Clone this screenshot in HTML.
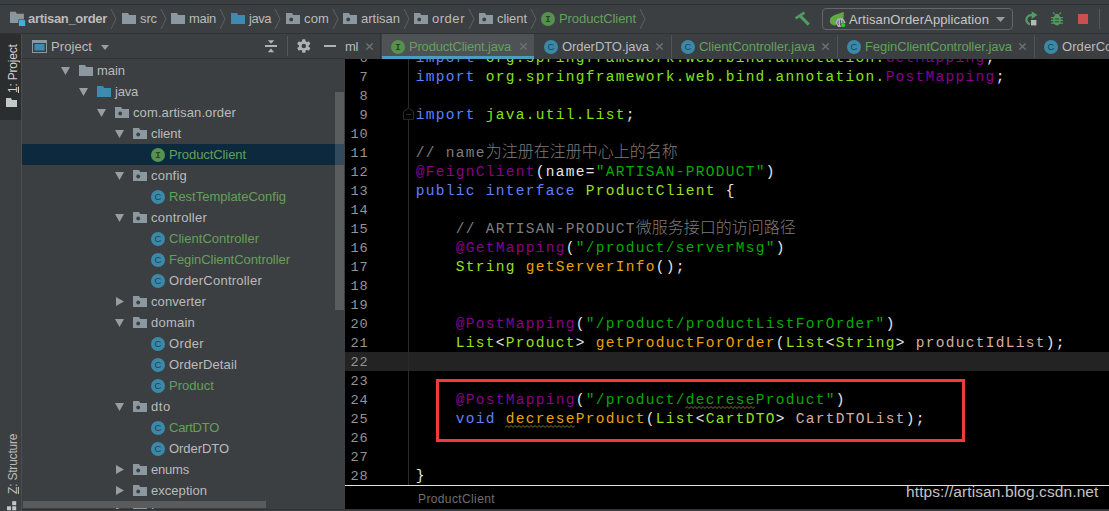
<!DOCTYPE html>
<html><head><meta charset="utf-8"><title>ProductClient</title><style>
*{box-sizing:border-box;margin:0;padding:0}
html,body{width:1109px;height:511px;overflow:hidden;background:#3c3f41}
body{position:relative;font-family:"Liberation Sans","Noto Sans CJK SC",sans-serif;font-size:13px;color:#bbbbbb}
.abs{position:absolute}
.t{position:absolute;white-space:pre;line-height:16px;height:16px;font-size:13px;transform-origin:0 50%}
.g{color:#62a15a}
.w{color:#bbbbbb}
#editor{position:absolute;left:345px;top:59px;width:764px;height:427px;background:#000;overflow:hidden}
.ln{position:absolute;left:0;width:23.6px;text-align:right;font-family:"Liberation Mono",monospace;font-size:13.6px;letter-spacing:0.84px;color:#949494;height:19px;line-height:19px;white-space:pre}
.cl{position:absolute;left:70.65px;height:19px;line-height:19px;font-family:"Liberation Mono","Noto Sans CJK SC",monospace;font-size:14.5px;letter-spacing:1.298px;white-space:pre;color:#e6e6e6}
.cj{font-family:"Noto Sans CJK SC",sans-serif;font-size:16px;font-weight:300;line-height:0;letter-spacing:0}
.k{color:#5f80ff}
.p{color:#84e41a}
.a{color:#88008c}
.c{color:#7d7d7d}
.s{color:#00ac00}
.y{color:#98e020}
.m{color:#e8a408}
.v{color:#d6aea6}
.x{color:#e6e6e6}
</style></head><body>
<div class="abs" style="left:0;top:0;width:1109px;height:4px;background:#3c3f41"></div>
<div class="abs" style="left:0;top:4px;width:1109px;height:1px;background:#2d2f30"></div>
<div class="abs" style="left:0;top:33px;width:1109px;height:1px;background:#323232"></div>
<svg class="abs" style="left:10px;top:11px" width="17" height="17" viewBox="10 11 17 17"><path d="M10 11.7h5.6l1.3 2.1h7v9.3h-13.9z" fill="#8a969e"/><rect x="18.3" y="19.5" width="7.4" height="7" fill="#3c3f41"/><rect x="18.9" y="20.1" width="6.3" height="5.9" fill="#3fb2de"/></svg>
<div class="t w" style="left:28px;top:11px;font-weight:bold;letter-spacing:-0.315px;">artisan_order</div>
<svg class="abs" style="left:110px;top:8px" width="8" height="22" viewBox="0 0 8 22"><path d="M1 1l5 10l-5 10" fill="none" stroke="#5e6163" stroke-width="1"/></svg>
<svg class="abs" style="left:122px;top:13px" width="14" height="11" viewBox="0 0 14 11"><path d="M0 0h6l1.2 2h6.8v9h-14z" fill="#8c98a0"/></svg>
<div class="t w" style="left:140px;top:11px;letter-spacing:-0.115px;">src</div>
<svg class="abs" style="left:160px;top:8px" width="8" height="22" viewBox="0 0 8 22"><path d="M1 1l5 10l-5 10" fill="none" stroke="#5e6163" stroke-width="1"/></svg>
<svg class="abs" style="left:171px;top:13px" width="14" height="11" viewBox="0 0 14 11"><path d="M0 0h6l1.2 2h6.8v9h-14z" fill="#8c98a0"/></svg>
<div class="t w" style="left:189px;top:11px;letter-spacing:-0.297px;">main</div>
<svg class="abs" style="left:219px;top:8px" width="8" height="22" viewBox="0 0 8 22"><path d="M1 1l5 10l-5 10" fill="none" stroke="#5e6163" stroke-width="1"/></svg>
<svg class="abs" style="left:231px;top:13px" width="14" height="11" viewBox="0 0 14 11"><path d="M0 0h6l1.2 2h6.8v9h-14z" fill="#3d8cb0"/></svg>
<div class="t w" style="left:249px;top:11px;letter-spacing:-0.465px;">java</div>
<svg class="abs" style="left:274px;top:8px" width="8" height="22" viewBox="0 0 8 22"><path d="M1 1l5 10l-5 10" fill="none" stroke="#5e6163" stroke-width="1"/></svg>
<svg class="abs" style="left:286px;top:13px" width="14" height="11" viewBox="0 0 14 11"><path d="M0 0h6l1.2 2h6.8v9h-14z" fill="#8c98a0"/><circle cx="5.2" cy="6.5" r="1.9" fill="#3c3f41"/></svg>
<div class="t w" style="left:304px;top:11px;letter-spacing:0.146px;">com</div>
<svg class="abs" style="left:332px;top:8px" width="8" height="22" viewBox="0 0 8 22"><path d="M1 1l5 10l-5 10" fill="none" stroke="#5e6163" stroke-width="1"/></svg>
<svg class="abs" style="left:343px;top:13px" width="14" height="11" viewBox="0 0 14 11"><path d="M0 0h6l1.2 2h6.8v9h-14z" fill="#8c98a0"/><circle cx="5.2" cy="6.5" r="1.9" fill="#3c3f41"/></svg>
<div class="t w" style="left:361px;top:11px;letter-spacing:-0.004px;">artisan</div>
<svg class="abs" style="left:403px;top:8px" width="8" height="22" viewBox="0 0 8 22"><path d="M1 1l5 10l-5 10" fill="none" stroke="#5e6163" stroke-width="1"/></svg>
<svg class="abs" style="left:414px;top:13px" width="14" height="11" viewBox="0 0 14 11"><path d="M0 0h6l1.2 2h6.8v9h-14z" fill="#8c98a0"/><circle cx="5.2" cy="6.5" r="1.9" fill="#3c3f41"/></svg>
<div class="t w" style="left:432px;top:11px;letter-spacing:0.528px;">order</div>
<svg class="abs" style="left:468px;top:8px" width="8" height="22" viewBox="0 0 8 22"><path d="M1 1l5 10l-5 10" fill="none" stroke="#5e6163" stroke-width="1"/></svg>
<svg class="abs" style="left:479px;top:13px" width="14" height="11" viewBox="0 0 14 11"><path d="M0 0h6l1.2 2h6.8v9h-14z" fill="#8c98a0"/><circle cx="5.2" cy="6.5" r="1.9" fill="#3c3f41"/></svg>
<div class="t w" style="left:497px;top:11px;letter-spacing:-0.060px;">client</div>
<svg class="abs" style="left:530px;top:8px" width="8" height="22" viewBox="0 0 8 22"><path d="M1 1l5 10l-5 10" fill="none" stroke="#5e6163" stroke-width="1"/></svg>
<svg class="abs" style="left:541px;top:11.5px" width="14" height="14" viewBox="0 0 14 14"><circle cx="7" cy="7" r="7" fill="#55924e"/><text x="7" y="10" text-anchor="middle" font-family="Liberation Mono,monospace" font-weight="bold" font-size="9" fill="#264026">I</text></svg>
<div class="t g" style="left:559px;top:11px;letter-spacing:-0.081px;">ProductClient</div>
<svg class="abs" style="left:639px;top:8px" width="8" height="22" viewBox="0 0 8 22"><path d="M1 1l5 10l-5 10" fill="none" stroke="#5e6163" stroke-width="1"/></svg>
<svg class="abs" style="left:785px;top:4px" width="40" height="30" viewBox="785 4 40 30"><path d="M795.6 18.4L804.4 12.6" stroke="#4f9e5f" stroke-width="2.7" fill="none"/><path d="M799.6 15.4L808.8 24.6" stroke="#4f9e5f" stroke-width="2.9" fill="none"/></svg>
<div class="abs" style="left:822px;top:8px;width:191px;height:22px;border:1px solid #646769;border-radius:4px"></div>
<svg class="abs" style="left:826px;top:8px" width="24" height="22" viewBox="826 8 24 22"><path d="M843.4 11.8C838 14.5 830 14.5 829.8 21C829.8 24.5 833 25.5 836.5 24.6C842.5 23 844.8 17.5 843.4 11.8Z" fill="#62a844"/><path d="M833 25.2l2-2.4l0.6 2.6z" fill="#62a844"/><path d="M838 18.2h5l2.6 4.4l-2.6 4.4h-5l-2.6-4.4z" fill="#aeb5bb"/><path d="M840.5 19.8v5.4M838.6 20.6c-1 1.2-1 3 0 4.2M842.4 20.6c1 1.2 1 3 0 4.2" stroke="#4a4f55" stroke-width="0.9" fill="none"/><circle cx="843.1" cy="25.2" r="2.5" fill="#3c3f41"/><circle cx="843.1" cy="25.2" r="2.1" fill="#16d916"/></svg>
<div class="t w" style="left:849px;top:12px;color:#c8c8c8;letter-spacing:0.118px;">ArtisanOrderApplication</div>
<svg class="abs" style="left:996px;top:17px" width="9" height="5" viewBox="0 0 9 5"><path d="M0 0h9l-4.5 5z" fill="#9a9da0"/></svg>
<svg class="abs" style="left:1020px;top:8px" width="22" height="22" viewBox="1020 8 22 22"><path d="M1032 15.2A4.6 4.6 0 1 0 1030 24.2" fill="none" stroke="#4f9e5f" stroke-width="2.2"/><path d="M1031.6 11.2l5.8 3.9l-5.8 3.9z" fill="#4f9e5f"/><rect x="1031" y="20" width="5.4" height="5.4" fill="#b4b8bb"/></svg>
<svg class="abs" style="left:1048px;top:8px" width="20" height="22" viewBox="1048 8 20 22"><ellipse cx="1057" cy="20" rx="3.9" ry="5.4" fill="#4f9e5f"/><path d="M1054.4 15.6a2.7 2.7 0 0 1 5.2 0z" fill="#4f9e5f"/><path d="M1054.6 14.4l-1.6-2.2M1059.4 14.4l1.6-2.2" stroke="#4f9e5f" stroke-width="1.1"/><path d="M1051 17.6h12M1051 20.4h12M1051 23.2h12" stroke="#4f9e5f" stroke-width="1.3"/><path d="M1054.8 19h4.4M1054.8 21.8h4.4" stroke="#3c3f41" stroke-width="1"/></svg>
<div class="abs" style="left:1078px;top:14px;width:10px;height:10px;background:#c9504f"></div>
<div class="abs" style="left:1099px;top:9px;width:1px;height:20px;background:#55585a"></div>
<div class="abs" style="left:0;top:34px;width:22px;height:477px;background:#3c3f41"></div>
<div class="abs" style="left:21px;top:34px;width:1px;height:477px;background:#4b4d4f"></div>
<div class="abs" style="left:0;top:34px;width:21px;height:86px;background:#2b2d2e"></div>
<div class="t" style="left:5px;top:93px;transform:rotate(-90deg);transform-origin:0 0;color:#d0d0d0;font-size:12px;letter-spacing:-0.2px"><u>1</u>: Project</div>
<svg class="abs" style="left:6px;top:98px" width="11" height="9" viewBox="0 0 11 9"><path d="M0 0h5l1 2h5v7h-11z" fill="#c3c8cb"/></svg>
<div class="t" style="left:5px;top:494px;transform:rotate(-90deg);transform-origin:0 0;color:#bbbbbb;font-size:12px;letter-spacing:-0.2px"><u>Z</u>: Structure</div>
<svg class="abs" style="left:7px;top:501px" width="10" height="10" viewBox="0 0 10 10"><rect x="5.2" y="0.2" width="4" height="4" fill="#c3c7ca"/><rect x="0" y="5.3" width="4" height="4" fill="#c3c7ca"/><rect x="5.2" y="5.3" width="4" height="4" fill="#c3c7ca"/></svg>
<div class="abs" style="left:22px;top:58px;width:323px;height:1px;background:#323232"></div>
<svg class="abs" style="left:32px;top:40px" width="15" height="13" viewBox="0 0 15 13"><rect x="0.5" y="0.5" width="14" height="12" fill="none" stroke="#8c98a0"/><rect x="0.5" y="0.5" width="14" height="2.5" fill="#8c98a0"/><rect x="2.5" y="4" width="10" height="6.5" fill="#3a8db0"/></svg>
<div class="t w" style="left:51px;top:39px;font-size:13px;letter-spacing:0.076px;">Project</div>
<svg class="abs" style="left:100.5px;top:44.5px" width="8" height="5" viewBox="0 0 8 5"><path d="M0 0h8l-4 5z" fill="#9a9da0"/></svg>
<svg class="abs" style="left:264px;top:38px" width="16" height="16" viewBox="264 38 16 16"><rect x="265" y="45" width="12" height="2" fill="#afb1b3"/><path d="M267.8 40.2h6.4l-3.2 3.6z" fill="#afb1b3"/><path d="M267.8 52.2h6.4l-3.2-3.6z" fill="#afb1b3"/></svg>
<div class="abs" style="left:287px;top:36px;width:1px;height:20px;background:#555759"></div>
<svg class="abs" style="left:297px;top:39px" width="14" height="14" viewBox="0 0 14 14"><g fill="#afb1b3"><circle cx="6.8" cy="7" r="4.9"/><rect x="5.1" y="0.2" width="3.4" height="13.6" rx="0.8"/><rect x="5.1" y="0.2" width="3.4" height="13.6" rx="0.8" transform="rotate(60 6.8 7)"/><rect x="5.1" y="0.2" width="3.4" height="13.6" rx="0.8" transform="rotate(120 6.8 7)"/></g><circle cx="6.8" cy="7" r="2.3" fill="#3c3f41"/></svg>
<div class="abs" style="left:324px;top:45px;width:12px;height:2px;background:#afb1b3"></div>
<div class="abs" id="tree" style="left:22px;top:59px;width:323px;height:452px;overflow:hidden">
<svg class="abs" style="left:39px;top:8px" width="9" height="8" viewBox="0 0 9 8"><path d="M0 0h9l-4.5 8z" fill="#9a9da0"/></svg>
<svg class="abs" style="left:57px;top:6px" width="14" height="11" viewBox="0 0 14 11"><path d="M0 0h6l1.2 2h6.8v9h-14z" fill="#8c98a0"/></svg>
<div class="t w" style="left:75px;top:4px;letter-spacing:-0.047px;">main</div>
<svg class="abs" style="left:57px;top:29px" width="9" height="8" viewBox="0 0 9 8"><path d="M0 0h9l-4.5 8z" fill="#9a9da0"/></svg>
<svg class="abs" style="left:75px;top:27px" width="14" height="11" viewBox="0 0 14 11"><path d="M0 0h6l1.2 2h6.8v9h-14z" fill="#3d8cb0"/></svg>
<div class="t w" style="left:93px;top:25px;letter-spacing:-0.215px;">java</div>
<svg class="abs" style="left:75px;top:50px" width="9" height="8" viewBox="0 0 9 8"><path d="M0 0h9l-4.5 8z" fill="#9a9da0"/></svg>
<svg class="abs" style="left:93px;top:48px" width="14" height="11" viewBox="0 0 14 11"><path d="M0 0h6l1.2 2h6.8v9h-14z" fill="#8c98a0"/><circle cx="5.2" cy="6.5" r="1.9" fill="#3c3f41"/></svg>
<div class="t w" style="left:111px;top:46px;letter-spacing:0.108px;">com.artisan.order</div>
<svg class="abs" style="left:93px;top:71px" width="9" height="8" viewBox="0 0 9 8"><path d="M0 0h9l-4.5 8z" fill="#9a9da0"/></svg>
<svg class="abs" style="left:111px;top:69px" width="14" height="11" viewBox="0 0 14 11"><path d="M0 0h6l1.2 2h6.8v9h-14z" fill="#8c98a0"/><circle cx="5.2" cy="6.5" r="1.9" fill="#3c3f41"/></svg>
<div class="t w" style="left:129px;top:67px;letter-spacing:-0.060px;">client</div>
<div class="abs" style="left:0;top:85px;width:322px;height:21px;background:#0d293e"></div>
<svg class="abs" style="left:129px;top:88.5px" width="14" height="14" viewBox="0 0 14 14"><circle cx="7" cy="7" r="7" fill="#55924e"/><text x="7" y="10" text-anchor="middle" font-family="Liberation Mono,monospace" font-weight="bold" font-size="9" fill="#264026">I</text></svg>
<div class="t g" style="left:147px;top:88px;letter-spacing:-0.081px;">ProductClient</div>
<svg class="abs" style="left:93px;top:113px" width="9" height="8" viewBox="0 0 9 8"><path d="M0 0h9l-4.5 8z" fill="#9a9da0"/></svg>
<svg class="abs" style="left:111px;top:111px" width="14" height="11" viewBox="0 0 14 11"><path d="M0 0h6l1.2 2h6.8v9h-14z" fill="#8c98a0"/><circle cx="5.2" cy="6.5" r="1.9" fill="#3c3f41"/></svg>
<div class="t w" style="left:129px;top:109px;letter-spacing:0.216px;">config</div>
<svg class="abs" style="left:129px;top:130.5px" width="14" height="14" viewBox="0 0 14 14"><circle cx="7" cy="7" r="7" fill="#3b89a8"/><text x="7" y="9.8" text-anchor="middle" font-family="Liberation Sans,sans-serif" font-size="9.5" fill="#21404f">C</text></svg>
<div class="t g" style="left:147px;top:130px;letter-spacing:-0.003px;">RestTemplateConfig</div>
<svg class="abs" style="left:93px;top:155px" width="9" height="8" viewBox="0 0 9 8"><path d="M0 0h9l-4.5 8z" fill="#9a9da0"/></svg>
<svg class="abs" style="left:111px;top:153px" width="14" height="11" viewBox="0 0 14 11"><path d="M0 0h6l1.2 2h6.8v9h-14z" fill="#8c98a0"/><circle cx="5.2" cy="6.5" r="1.9" fill="#3c3f41"/></svg>
<div class="t w" style="left:129px;top:151px;letter-spacing:0.253px;">controller</div>
<svg class="abs" style="left:129px;top:172.5px" width="14" height="14" viewBox="0 0 14 14"><circle cx="7" cy="7" r="7" fill="#3b89a8"/><text x="7" y="9.8" text-anchor="middle" font-family="Liberation Sans,sans-serif" font-size="9.5" fill="#21404f">C</text></svg>
<div class="t g" style="left:147px;top:172px;letter-spacing:0.025px;">ClientController</div>
<svg class="abs" style="left:129px;top:193.5px" width="14" height="14" viewBox="0 0 14 14"><circle cx="7" cy="7" r="7" fill="#3b89a8"/><text x="7" y="9.8" text-anchor="middle" font-family="Liberation Sans,sans-serif" font-size="9.5" fill="#21404f">C</text></svg>
<div class="t g" style="left:147px;top:193px;letter-spacing:-0.054px;">FeginClientController</div>
<svg class="abs" style="left:129px;top:214.5px" width="14" height="14" viewBox="0 0 14 14"><circle cx="7" cy="7" r="7" fill="#3b89a8"/><text x="7" y="9.8" text-anchor="middle" font-family="Liberation Sans,sans-serif" font-size="9.5" fill="#21404f">C</text></svg>
<div class="t w" style="left:147px;top:214px;letter-spacing:0.227px;">OrderController</div>
<svg class="abs" style="left:94px;top:238px" width="8" height="9" viewBox="0 0 8 9"><path d="M0 0v9l8-4.5z" fill="#9a9da0"/></svg>
<svg class="abs" style="left:111px;top:237px" width="14" height="11" viewBox="0 0 14 11"><path d="M0 0h6l1.2 2h6.8v9h-14z" fill="#8c98a0"/><circle cx="5.2" cy="6.5" r="1.9" fill="#3c3f41"/></svg>
<div class="t w" style="left:129px;top:235px;letter-spacing:0.089px;">converter</div>
<svg class="abs" style="left:93px;top:260px" width="9" height="8" viewBox="0 0 9 8"><path d="M0 0h9l-4.5 8z" fill="#9a9da0"/></svg>
<svg class="abs" style="left:111px;top:258px" width="14" height="11" viewBox="0 0 14 11"><path d="M0 0h6l1.2 2h6.8v9h-14z" fill="#8c98a0"/><circle cx="5.2" cy="6.5" r="1.9" fill="#3c3f41"/></svg>
<div class="t w" style="left:129px;top:256px;letter-spacing:0.227px;">domain</div>
<svg class="abs" style="left:129px;top:277.5px" width="14" height="14" viewBox="0 0 14 14"><circle cx="7" cy="7" r="7" fill="#3b89a8"/><text x="7" y="9.8" text-anchor="middle" font-family="Liberation Sans,sans-serif" font-size="9.5" fill="#21404f">C</text></svg>
<div class="t w" style="left:147px;top:277px;letter-spacing:0.353px;">Order</div>
<svg class="abs" style="left:129px;top:298.5px" width="14" height="14" viewBox="0 0 14 14"><circle cx="7" cy="7" r="7" fill="#3b89a8"/><text x="7" y="9.8" text-anchor="middle" font-family="Liberation Sans,sans-serif" font-size="9.5" fill="#21404f">C</text></svg>
<div class="t w" style="left:147px;top:298px;letter-spacing:0.139px;">OrderDetail</div>
<svg class="abs" style="left:129px;top:319.5px" width="14" height="14" viewBox="0 0 14 14"><circle cx="7" cy="7" r="7" fill="#3b89a8"/><text x="7" y="9.8" text-anchor="middle" font-family="Liberation Sans,sans-serif" font-size="9.5" fill="#21404f">C</text></svg>
<div class="t g" style="left:147px;top:319px;letter-spacing:0.027px;">Product</div>
<svg class="abs" style="left:93px;top:344px" width="9" height="8" viewBox="0 0 9 8"><path d="M0 0h9l-4.5 8z" fill="#9a9da0"/></svg>
<svg class="abs" style="left:111px;top:342px" width="14" height="11" viewBox="0 0 14 11"><path d="M0 0h6l1.2 2h6.8v9h-14z" fill="#8c98a0"/><circle cx="5.2" cy="6.5" r="1.9" fill="#3c3f41"/></svg>
<div class="t w" style="left:129px;top:340px;letter-spacing:0.641px;">dto</div>
<svg class="abs" style="left:129px;top:361.5px" width="14" height="14" viewBox="0 0 14 14"><circle cx="7" cy="7" r="7" fill="#3b89a8"/><text x="7" y="9.8" text-anchor="middle" font-family="Liberation Sans,sans-serif" font-size="9.5" fill="#21404f">C</text></svg>
<div class="t g" style="left:147px;top:361px;letter-spacing:-0.252px;">CartDTO</div>
<svg class="abs" style="left:129px;top:382.5px" width="14" height="14" viewBox="0 0 14 14"><circle cx="7" cy="7" r="7" fill="#3b89a8"/><text x="7" y="9.8" text-anchor="middle" font-family="Liberation Sans,sans-serif" font-size="9.5" fill="#21404f">C</text></svg>
<div class="t w" style="left:147px;top:382px;letter-spacing:-0.055px;">OrderDTO</div>
<svg class="abs" style="left:94px;top:406px" width="8" height="9" viewBox="0 0 8 9"><path d="M0 0v9l8-4.5z" fill="#9a9da0"/></svg>
<svg class="abs" style="left:111px;top:405px" width="14" height="11" viewBox="0 0 14 11"><path d="M0 0h6l1.2 2h6.8v9h-14z" fill="#8c98a0"/><circle cx="5.2" cy="6.5" r="1.9" fill="#3c3f41"/></svg>
<div class="t w" style="left:129px;top:403px;letter-spacing:-0.206px;">enums</div>
<svg class="abs" style="left:94px;top:427px" width="8" height="9" viewBox="0 0 8 9"><path d="M0 0v9l8-4.5z" fill="#9a9da0"/></svg>
<svg class="abs" style="left:111px;top:426px" width="14" height="11" viewBox="0 0 14 11"><path d="M0 0h6l1.2 2h6.8v9h-14z" fill="#8c98a0"/><circle cx="5.2" cy="6.5" r="1.9" fill="#3c3f41"/></svg>
<div class="t w" style="left:129px;top:424px;letter-spacing:0.038px;">exception</div>
<svg class="abs" style="left:94px;top:448px" width="8" height="9" viewBox="0 0 8 9"><path d="M0 0v9l8-4.5z" fill="#9a9da0"/></svg>
<svg class="abs" style="left:111px;top:447px" width="14" height="11" viewBox="0 0 14 11"><path d="M0 0h6l1.2 2h6.8v9h-14z" fill="#8c98a0"/><circle cx="5.2" cy="6.5" r="1.9" fill="#3c3f41"/></svg>
<div class="t w" style="left:129px;top:445px;letter-spacing:0.359px;">feign</div>
</div>
<div class="abs" style="left:335px;top:92px;width:9px;height:218px;background:rgba(255,255,255,0.155)"></div>
<div class="abs" style="left:23px;top:500.5px;width:243px;height:7.5px;background:#595b5d"></div>
<div class="abs" style="left:345px;top:34px;width:764px;height:25px;background:#3c3f41"></div>
<div class="abs" style="left:382px;top:34px;width:152px;height:25px;background:#4e5254"></div>
<div class="abs" style="left:382px;top:56px;width:152px;height:3px;background:#4a9cc0"></div>
<div class="t w" style="left:345px;top:39px;letter-spacing:-0.259px;">ml</div>
<svg class="abs" style="left:365.5px;top:43px" width="7" height="7" viewBox="0 0 7 7"><path d="M0.3 0.3l6.4 6.4M6.7 0.3l-6.4 6.4" stroke="#6e7274" stroke-width="1.25"/></svg>
<div class="abs" style="left:380px;top:34px;width:1px;height:25px;background:#323232"></div>
<svg class="abs" style="left:391px;top:40px" width="14" height="14" viewBox="0 0 14 14"><circle cx="7" cy="7" r="7" fill="#55924e"/><text x="7" y="10" text-anchor="middle" font-family="Liberation Mono,monospace" font-weight="bold" font-size="9" fill="#264026">I</text></svg>
<div class="t g" style="left:409px;top:39px;letter-spacing:-0.194px;">ProductClient.java</div>
<svg class="abs" style="left:519.5px;top:43px" width="7" height="7" viewBox="0 0 7 7"><path d="M0.3 0.3l6.4 6.4M6.7 0.3l-6.4 6.4" stroke="#6e7274" stroke-width="1.25"/></svg>
<svg class="abs" style="left:544px;top:40px" width="14" height="14" viewBox="0 0 14 14"><circle cx="7" cy="7" r="7" fill="#3b89a8"/><text x="7" y="9.8" text-anchor="middle" font-family="Liberation Sans,sans-serif" font-size="9.5" fill="#21404f">C</text></svg>
<div class="t w" style="left:562px;top:39px;letter-spacing:-0.070px;">OrderDTO.java</div>
<svg class="abs" style="left:655.5px;top:43px" width="7" height="7" viewBox="0 0 7 7"><path d="M0.3 0.3l6.4 6.4M6.7 0.3l-6.4 6.4" stroke="#6e7274" stroke-width="1.25"/></svg>
<div class="abs" style="left:671px;top:35px;width:1px;height:23px;background:#505355"></div>
<svg class="abs" style="left:681px;top:40px" width="14" height="14" viewBox="0 0 14 14"><circle cx="7" cy="7" r="7" fill="#3b89a8"/><text x="7" y="9.8" text-anchor="middle" font-family="Liberation Sans,sans-serif" font-size="9.5" fill="#21404f">C</text></svg>
<div class="t g" style="left:699px;top:39px;letter-spacing:-0.016px;">ClientController.java</div>
<svg class="abs" style="left:821.5px;top:43px" width="7" height="7" viewBox="0 0 7 7"><path d="M0.3 0.3l6.4 6.4M6.7 0.3l-6.4 6.4" stroke="#6e7274" stroke-width="1.25"/></svg>
<div class="abs" style="left:837px;top:35px;width:1px;height:23px;background:#505355"></div>
<svg class="abs" style="left:847px;top:40px" width="14" height="14" viewBox="0 0 14 14"><circle cx="7" cy="7" r="7" fill="#3b89a8"/><text x="7" y="9.8" text-anchor="middle" font-family="Liberation Sans,sans-serif" font-size="9.5" fill="#21404f">C</text></svg>
<div class="t g" style="left:865px;top:39px;letter-spacing:-0.072px;">FeginClientController.java</div>
<svg class="abs" style="left:1018.5px;top:43px" width="7" height="7" viewBox="0 0 7 7"><path d="M0.3 0.3l6.4 6.4M6.7 0.3l-6.4 6.4" stroke="#6e7274" stroke-width="1.25"/></svg>
<div class="abs" style="left:1034px;top:35px;width:1px;height:23px;background:#505355"></div>
<svg class="abs" style="left:1044px;top:40px" width="14" height="14" viewBox="0 0 14 14"><circle cx="7" cy="7" r="7" fill="#3b89a8"/><text x="7" y="9.8" text-anchor="middle" font-family="Liberation Sans,sans-serif" font-size="9.5" fill="#21404f">C</text></svg>
<div class="t w" style="left:1062px;top:39px;letter-spacing:0.084px;">OrderController.java</div>
<div id="editor">
<div class="abs" style="left:0;top:293px;width:764px;height:19px;background:#232323"></div>
<div class="abs" style="left:63px;top:0;width:1px;height:427px;background:#2a2a2a"></div>
<div class="ln" style="top:-10.5px">6</div>
<div class="cl" style="top:-10px"><span class="k">import</span> <span class="p">org.springframework.web.bind.annotation.</span><span class="a">GetMapping</span>;</div>
<div class="ln" style="top:8.5px">7</div>
<div class="cl" style="top:9px"><span class="k">import</span> <span class="p">org.springframework.web.bind.annotation.</span><span class="a">PostMapping</span>;</div>
<div class="ln" style="top:27.5px">8</div>
<div class="ln" style="top:46.5px">9</div>
<div class="cl" style="top:47px"><span class="k">import</span> <span class="p">java.util.List</span>;</div>
<div class="ln" style="top:65.5px">10</div>
<div class="ln" style="top:84.5px">11</div>
<div class="cl" style="top:85px"><span class="c">// name<span class="cj">为注册在注册中心上的名称</span></span></div>
<div class="ln" style="top:103.5px">12</div>
<div class="cl" style="top:104px"><span class="a">@FeignClient</span>(name=<span class="s">&quot;ARTISAN-PRODUCT&quot;</span>)</div>
<div class="ln" style="top:122.5px">13</div>
<div class="cl" style="top:123px"><span class="k">public interface</span> <span class="y">ProductClient</span> {</div>
<div class="ln" style="top:141.5px">14</div>
<div class="ln" style="top:160.5px">15</div>
<div class="cl" style="top:161px">    <span class="c">// ARTISAN-PRODUCT<span class="cj">微服务接口的访问路径</span></span></div>
<div class="ln" style="top:179.5px">16</div>
<div class="cl" style="top:180px">    <span class="a">@GetMapping</span>(<span class="s">&quot;/product/serverMsg&quot;</span>)</div>
<div class="ln" style="top:198.5px">17</div>
<div class="cl" style="top:199px">    <span class="y">String</span> <span class="m">getServerInfo</span>();</div>
<div class="ln" style="top:217.5px">18</div>
<div class="ln" style="top:236.5px">19</div>
<div class="ln" style="top:255.5px">20</div>
<div class="cl" style="top:256px">    <span class="a">@PostMapping</span>(<span class="s">&quot;/product/productListForOrder&quot;</span>)</div>
<div class="ln" style="top:274.5px">21</div>
<div class="cl" style="top:275px">    <span class="y">List</span>&lt;<span class="y">Product</span>&gt; <span class="m">getProductForOrder</span>(<span class="y">List</span>&lt;<span class="y">String</span>&gt; <span class="v">productIdList</span>);</div>
<div class="ln" style="top:293.5px">22</div>
<div class="ln" style="top:312.5px">23</div>
<div class="ln" style="top:331.5px">24</div>
<div class="cl" style="top:332px">    <span class="a">@PostMapping</span>(<span class="s">"/product/decreseProduct"</span>)</div>
<div class="ln" style="top:350.5px">25</div>
<div class="cl" style="top:351px">    <span class="k">void</span> <span class="m">decreseProduct</span>(<span class="y">List</span>&lt;<span class="y">CartDTO</span>&gt; <span class="v">CartDTOList</span>);</div>
<div class="ln" style="top:369.5px">26</div>
<div class="ln" style="top:388.5px">27</div>
<div class="ln" style="top:407.5px">28</div>
<div class="cl" style="top:408px">}</div>
<svg class="abs" style="left:57px;top:48px" width="13" height="14" viewBox="402 107 13 14"><path d="M403.5 111.4l5-3.2l5 3.2v8h-10z" fill="#000" stroke="#2a2a2a" stroke-width="1"/><path d="M406 114.5h5" stroke="#2a2a2a" stroke-width="1"/></svg>
<svg class="abs" style="left:340px;top:347px" width="70" height="3" viewBox="0 0 70 3"><path d="M0 2.5L2 0.5L4 2.5L6 0.5L8 2.5L10 0.5L12 2.5L14 0.5L16 2.5L18 0.5L20 2.5L22 0.5L24 2.5L26 0.5L28 2.5L30 0.5L32 2.5L34 0.5L36 2.5L38 0.5L40 2.5L42 0.5L44 2.5L46 0.5L48 2.5L50 0.5L52 2.5L54 0.5L56 2.5L58 0.5L60 2.5L62 0.5L64 2.5L66 0.5L68 2.5L70 0.5" fill="none" stroke="#85853a" stroke-width="0.9"/></svg>
<svg class="abs" style="left:160px;top:366px" width="70" height="3" viewBox="0 0 70 3"><path d="M0 2.5L2 0.5L4 2.5L6 0.5L8 2.5L10 0.5L12 2.5L14 0.5L16 2.5L18 0.5L20 2.5L22 0.5L24 2.5L26 0.5L28 2.5L30 0.5L32 2.5L34 0.5L36 2.5L38 0.5L40 2.5L42 0.5L44 2.5L46 0.5L48 2.5L50 0.5L52 2.5L54 0.5L56 2.5L58 0.5L60 2.5L62 0.5L64 2.5L66 0.5L68 2.5L70 0.5" fill="none" stroke="#85853a" stroke-width="0.9"/></svg>
<div class="abs" style="left:91px;top:320px;width:529px;height:63px;border:3px solid #f03a3c"></div>
</div>
<div class="abs" style="left:345px;top:485px;width:764px;height:1px;background:#e0e0e0"></div>
<div class="abs" style="left:345px;top:486px;width:764px;height:23px;background:#000"></div>
<div class="t w" style="left:418px;top:491px;color:#6f6f6f;font-size:12px;letter-spacing:0.381px;">ProductClient</div>
<div class="abs" style="left:22px;top:509px;width:1087px;height:1px;background:#313335"></div>
<div class="abs" style="left:22px;top:510px;width:1087px;height:1px;background:#3c3f41"></div>
<div class="t w" style="left:906px;top:483px;font-size:15.5px;height:18px;line-height:18px;color:#c4c4c4;letter-spacing:0.101px;">https://artisan.blog.csdn.net</div>
</body></html>
